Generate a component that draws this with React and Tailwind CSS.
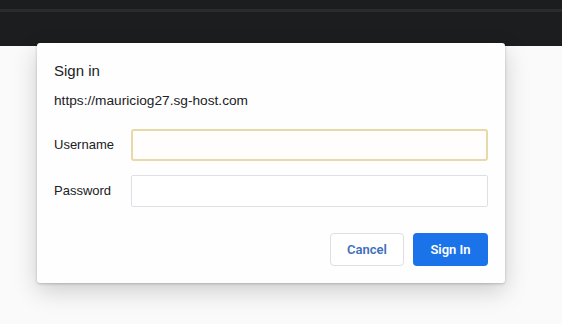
export default function App() {
  return (
    <div className="relative h-[324px] w-[562px] overflow-hidden bg-[#fafafa] font-['Liberation_Sans',Arial,sans-serif]">
      <div className="h-[46px] bg-[#1c1d1f]">
        <div className="h-[9px]" />
        <div className="h-[3px] bg-[#2a2b2e]" />
      </div>
      <div className="absolute left-[37px] top-[43px] w-[468px] rounded-[3px] bg-[#fefefe] px-[17px] pb-[17px] pt-[19px] shadow-[0_8px_24px_rgba(0,0,0,0.18),0_1px_3px_rgba(0,0,0,0.2)]">
        <h2 className="text-[15px] leading-[18px] text-[#202124]">Sign in</h2>
        <p className="mt-[13px] text-[13.7px] leading-[16px] text-[#202124]">https://mauriciog27.sg-host.com</p>
        <div className="mt-[20px] flex items-center">
          <label className="w-[77px] text-[13px] text-[#202124]">Username</label>
          <div className="h-[32px] flex-1 rounded-[3px] border-2 border-[#e8d9a8] bg-[#fffefc]" />
        </div>
        <div className="mt-[14px] flex items-center">
          <label className="w-[77px] text-[13px] text-[#202124]">Password</label>
          <div className="h-[32px] flex-1 rounded-[2px] border border-[#dfdfe5] bg-white" />
        </div>
        <div className="mt-[26px] flex justify-end gap-[9px] font-['Roboto',Arial,sans-serif]">
          <button className="h-[33px] w-[74px] rounded-[4px] border border-[#dedfe2] bg-white text-[13px] font-semibold text-[#3d6fbd]">Cancel</button>
          <button className="h-[33px] w-[75px] rounded-[4px] bg-[#1a73e8] text-[13px] font-semibold text-white">Sign In</button>
        </div>
      </div>
    </div>
  );
}
